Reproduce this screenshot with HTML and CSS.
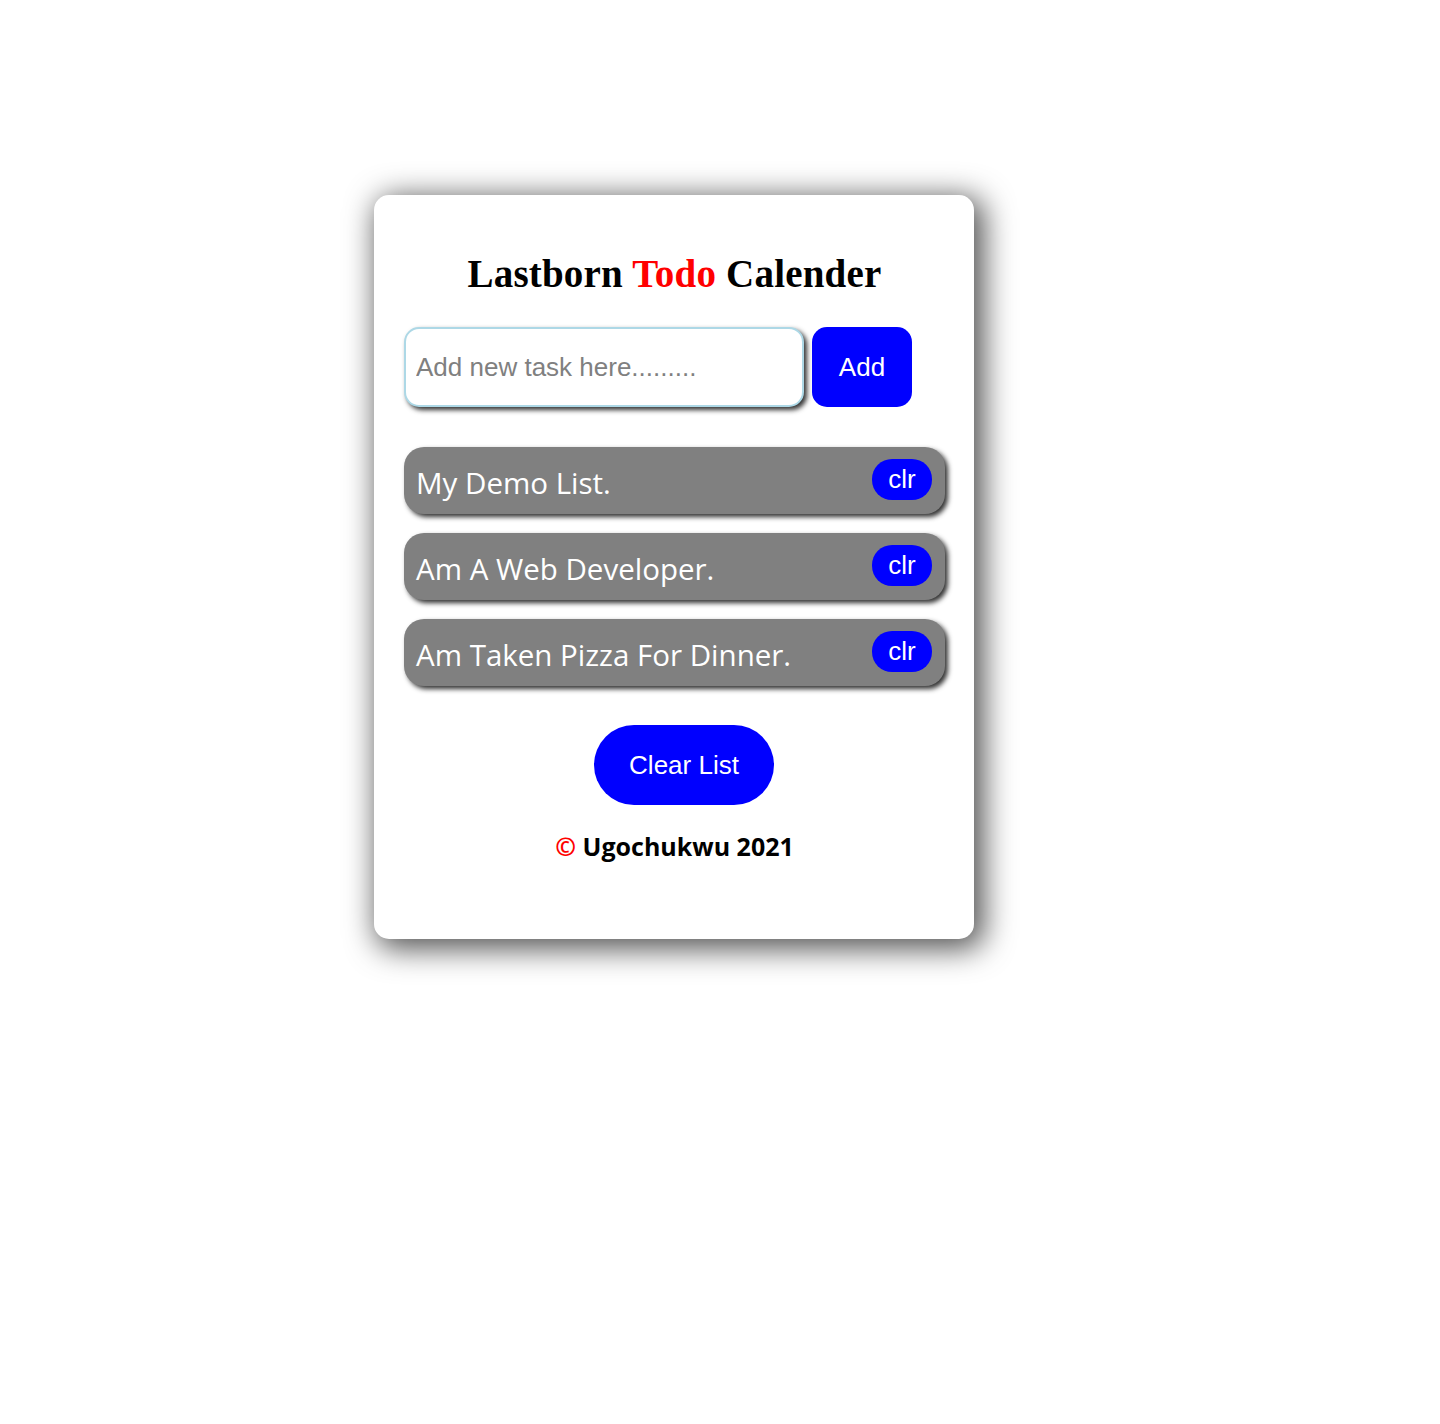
FILE: index.html
```html
<!DOCTYPE html>
<html lang="en">
<head>
<meta charset="utf-8">
<title>Lastborn Todo Calender</title>
<link rel="stylesheet" href="styles.css">
</head>
<body>
<div class="card">
  <h1 class="title">Lastborn <span class="red">Todo</span> Calender</h1>
  <div class="add-row">
    <input class="task-input" type="text" placeholder="Add new task here.........">
    <button class="add-btn">Add</button>
  </div>
  <ul class="list">
    <li class="item"><span class="item-text">My Demo List.</span><button class="clr-btn">clr</button></li>
    <li class="item"><span class="item-text">Am A Web Developer.</span><button class="clr-btn">clr</button></li>
    <li class="item"><span class="item-text">Am Taken Pizza For Dinner.</span><button class="clr-btn">clr</button></li>
  </ul>
  <div class="clear-wrap"><button class="clear-btn">Clear List</button></div>
  <p class="footer"><span class="red">©</span> Ugochukwu 2021</p>
</div>
</body>
</html>
```

FILE: styles.css
```css
html, body {
  margin: 0;
  padding: 0;
  background: #ffffff;
}
body {
  padding: 195px 0 200px 374px;
}
.card {
  width: 600px;
  box-sizing: border-box;
  background: #ffffff;
  border-radius: 15px;
  box-shadow: 6px 6px 30px 4px #555555;
  padding: 56px 29px 78px 30px;
}
.title {
  margin: 0;
  font-family: "Liberation Serif", "Times New Roman", serif;
  font-weight: bold;
  font-size: 39px;
  line-height: 46px;
  text-align: center;
  color: #000;
  letter-spacing: 0.2px;
}
.red { color: #ff0000; }
.add-row {
  display: flex;
  gap: 8px;
  margin-top: 30px;
}
.task-input {
  width: 400px;
  height: 80px;
  box-sizing: border-box;
  border: 2px solid #add8e6;
  border-radius: 15px;
  box-shadow: 3px 3px 5px #333333;
  padding: 0 10px;
  font-family: "Liberation Sans", Arial, sans-serif;
  font-size: 26px;
  color: #333;
  outline: none;
  margin: 0;
}
.task-input::placeholder { color: #808080; }
.add-btn {
  width: 100px;
  height: 80px;
  border: none;
  border-radius: 15px;
  background: #0000ff;
  color: #ffffff;
  font-family: "Liberation Sans", Arial, sans-serif;
  font-size: 26px;
  padding: 0;
  margin: 0;
}
.list {
  list-style: none;
  margin: 40px 0 0 0;
  padding: 0;
  display: flex;
  flex-direction: column;
  gap: 19px;
}
.item {
  height: 67px;
  box-sizing: border-box;
  background: #808080;
  border-radius: 20px;
  box-shadow: 3px 3px 5px #333333;
  display: flex;
  align-items: center;
  justify-content: space-between;
  padding: 0 13px 0 12px;
}
.item-text {
  font-family: "Open Sans", "Noto Sans", sans-serif;
  font-size: 29.5px;
  color: #ffffff;
  padding-top: 3px;
}
.clr-btn {
  width: 60px;
  height: 41px;
  border: none;
  border-radius: 20px;
  background: #0000ff;
  color: #ffffff;
  font-family: "Liberation Sans", Arial, sans-serif;
  font-size: 26px;
  padding: 0;
  margin: 0 0 2px 0;
}
.clear-wrap {
  display: flex;
  justify-content: center;
  margin-top: 39px;
  padding-left: 19px;
}
.clear-btn {
  width: 180px;
  height: 80px;
  border: none;
  border-radius: 40px;
  background: #0000ff;
  color: #ffffff;
  font-family: "Liberation Sans", Arial, sans-serif;
  font-size: 26px;
  padding: 0;
}
.footer {
  margin: 26px 0 0 0;
  font-family: "Open Sans", "Noto Sans", sans-serif;
  font-weight: bold;
  font-size: 25px;
  line-height: 30px;
  text-align: center;
  color: #000;
}
```
